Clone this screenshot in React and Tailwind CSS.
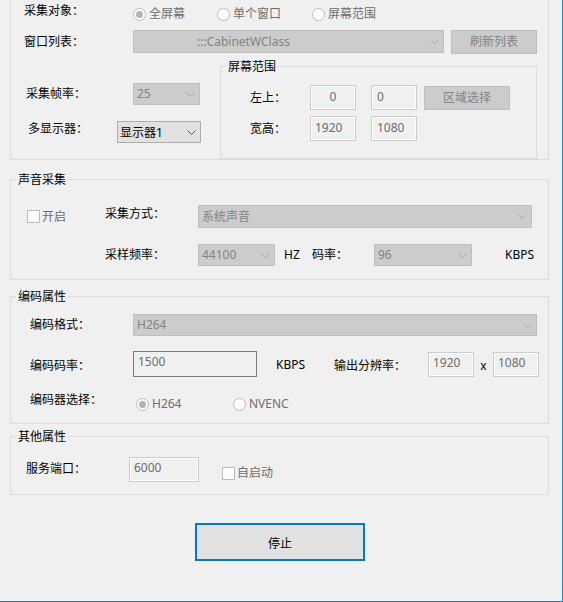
import React from 'react';

const font = 'font-["Noto_Sans","Noto_Sans_CJK_SC",sans-serif]';

function Chevron({ enabled }) {
  return (
    <svg width="9" height="5" viewBox="0 0 9 5" className="mr-[4px] shrink-0" fill="none">
      <polyline
        points="0.5,0.5 4.5,4.5 8.5,0.5"
        stroke={enabled ? '#5a5a5a' : '#a8a8a8'}
        strokeWidth="1"
      />
    </svg>
  );
}

function Combo({ text, className = '', enabled = false, textClass = 'pl-[3px]' }) {
  return (
    <div
      className={`flex items-center justify-between border ${
        enabled ? 'bg-[#e1e1e1] border-[#adadad] text-black' : 'bg-[#cccccc] border-[#bfbfbf] text-[#838383]'
      } ${className}`}
    >
      <span className={`whitespace-nowrap ${textClass}`}>{text}</span>
      <Chevron enabled={enabled} />
    </div>
  );
}

function Edit({ text, className = '', align = 'pl-[4px]' }) {
  return (
    <div
      className={`border border-[#cccccc] bg-[#f0f0f0] shadow-[inset_0_0_0_1px_#ffffff] text-[#6d6d6d] pt-[3px] ${align} ${className}`}
    >
      {text}
    </div>
  );
}

function DisabledButton({ text, className = '' }) {
  return (
    <div
      className={`flex items-center justify-center border border-[#bfbfbf] bg-[#cccccc] text-[#838383] ${className}`}
    >
      {text}
    </div>
  );
}

function Radio({ label, checked, className = '' }) {
  return (
    <div className={`flex items-center ${className}`}>
      <span className="flex items-center justify-center w-[13px] h-[13px] rounded-full border border-[#bcbcbc] bg-white">
        {checked && <span className="w-[7px] h-[7px] rounded-full bg-[#b4b4b4]" />}
      </span>
      <span className="ml-[3px] text-[#6d6d6d] whitespace-nowrap">{label}</span>
    </div>
  );
}

function Checkbox({ label, className = '' }) {
  return (
    <div className={`flex items-center ${className}`}>
      <span className="w-[13px] h-[13px] border border-[#bcbcbc] bg-white" />
      <span className="ml-[2px] text-[#6d6d6d] whitespace-nowrap">{label}</span>
    </div>
  );
}

function GroupBox({ title, className = '', children }) {
  return (
    <fieldset className={`border border-[#dcdcdc] ${className}`}>
      <legend className="ml-[5px] px-[2px] leading-[15px] text-black">{title}</legend>
      {children}
    </fieldset>
  );
}

export default function App() {
  return (
    <div
      className={`w-[563px] h-[602px] bg-[#f0f0f0] border-r border-b border-[#1883d7] overflow-hidden text-[12px] leading-[16px] text-black ${font}`}
    >
      {/* 视频采集 (top cut off) */}
      <div className="ml-[10px] w-[539px] h-[160px] border-x border-b border-[#dcdcdc]">
        <div className="flex h-[24px]">
          <span className="ml-[13px] mt-[3px] w-[109px]">采集对象：</span>
          <div className="flex mt-[6px] h-[16px]">
            <Radio label="全屏幕" checked className="w-[84px]" />
            <Radio label="单个窗口" className="w-[95px]" />
            <Radio label="屏幕范围" />
          </div>
        </div>

        <div className="flex items-start mt-[6px] h-[24px]">
          <span className="ml-[13px] mt-[4px] w-[109px]">窗口列表：</span>
          <Combo text=":::CabinetWClass" className="w-[311px] h-[23px]" textClass="pl-[63px]" />
          <DisabledButton text="刷新列表" className="ml-[7px] w-[86px] h-[24px]" />
        </div>

        <div className="flex">
          <div className="w-[209px]">
            <div className="flex items-center mt-[29px] h-[22px]">
              <span className="ml-[15px] w-[107px]">采集帧率：</span>
              <Combo text="25" className="w-[67px] h-[22px]" textClass="pl-[3px]" />
            </div>
            <div className="flex items-center mt-[16px] h-[22px]">
              <span className="ml-[17px] w-[89px] mb-[6px]">多显示器：</span>
              <Combo text="显示器1" enabled className="w-[84px] h-[22px]" textClass="pl-[2px] pt-[2px]" />
            </div>
          </div>

          <GroupBox title="屏幕范围" className="mt-[5px] w-[317px] h-[100px]">
            <div className="flex items-center mt-[11px] h-[25px]">
              <span className="ml-[29px] w-[60px]">左上：</span>
              <Edit text="0" align="text-center" className="w-[46px] h-[25px]" />
              <Edit text="0" align="pl-[5px]" className="ml-[15px] w-[46px] h-[25px]" />
              <DisabledButton text="区域选择" className="ml-[7px] w-[86px] h-[24px]" />
            </div>
            <div className="flex items-center mt-[6px] h-[25px]">
              <span className="ml-[29px] w-[60px]">宽高：</span>
              <Edit text="1920" align="pl-[4px]" className="w-[46px] h-[25px]" />
              <Edit text="1080" align="pl-[5px]" className="ml-[15px] w-[46px] h-[25px]" />
            </div>
          </GroupBox>
        </div>
      </div>

      {/* 声音采集 */}
      <GroupBox title="声音采集" className="ml-[10px] mt-[12px] w-[539px] h-[108px]">
        <div className="flex items-center mt-[18px] h-[23px]">
          <div className="w-[94px] pl-[16px]">
            <Checkbox label="开启" />
          </div>
          <span className="w-[93px] mb-[6px]">采集方式：</span>
          <Combo text="系统声音" className="w-[334px] h-[23px]" />
        </div>
        <div className="flex items-center mt-[16px] h-[22px]">
          <div className="w-[94px]" />
          <span className="w-[93px]">采样频率：</span>
          <Combo text="44100" className="w-[77px] h-[22px]" />
          <span className="ml-[9px] w-[28px]">HZ</span>
          <span className="w-[62px]">码率：</span>
          <Combo text="96" className="w-[98px] h-[22px]" />
          <span className="ml-[33px]">KBPS</span>
        </div>
      </GroupBox>

      {/* 编码属性 */}
      <GroupBox title="编码属性" className="ml-[10px] mt-[9px] w-[539px] h-[135px]">
        <div className="flex items-center mt-[10px] h-[22px]">
          <span className="ml-[19px] w-[103px]">编码格式：</span>
          <Combo text="H264" className="w-[404px] h-[22px]" />
        </div>
        <div className="flex items-start mt-[15px] h-[26px]">
          <span className="ml-[19px] w-[103px] mt-[7px]">编码码率：</span>
          <div className="w-[124px] h-[26px] border border-[#7a7a7a] bg-[#f0f0f0] text-[#6d6d6d] pt-[2px] pl-[4px]">
            1500
          </div>
          <span className="ml-[19px] w-[58px] mt-[6px]">KBPS</span>
          <span className="w-[94px] mt-[7px]">输出分辨率：</span>
          <Edit text="1920" align="pl-[4px]" className="mt-[1px] w-[46px] h-[25px] !pt-[2px]" />
          <span className="w-[19px] mt-[7px] text-center">x</span>
          <Edit text="1080" align="pl-[4px]" className="mt-[1px] w-[46px] h-[25px] !pt-[2px]" />
        </div>
        <div className="flex items-start mt-[15px] h-[20px]">
          <span className="ml-[19px] w-[103px]">编码器选择：</span>
          <div className="flex mt-[4px] ml-[3px]">
            <Radio label="H264" checked className="w-[97px]" />
            <Radio label="NVENC" />
          </div>
        </div>
      </GroupBox>

      {/* 其他属性 */}
      <GroupBox title="其他属性" className="ml-[10px] mt-[5px] w-[539px] h-[66px]">
        <div className="flex items-start mt-[13px] h-[25px]">
          <span className="ml-[15px] w-[103px] mt-[4px]">服务端口：</span>
          <Edit text="6000" align="pl-[4px]" className="w-[70px] h-[25px] !pt-[2px]" />
          <Checkbox label="自启动" className="ml-[23px] mt-[8px]" />
        </div>
      </GroupBox>

      <button className="block mt-[28px] ml-[195px] w-[170px] h-[38px] border-2 border-[#0078d7] bg-[#e1e1e1] text-black pt-[3px]">
        停止
      </button>
    </div>
  );
}
